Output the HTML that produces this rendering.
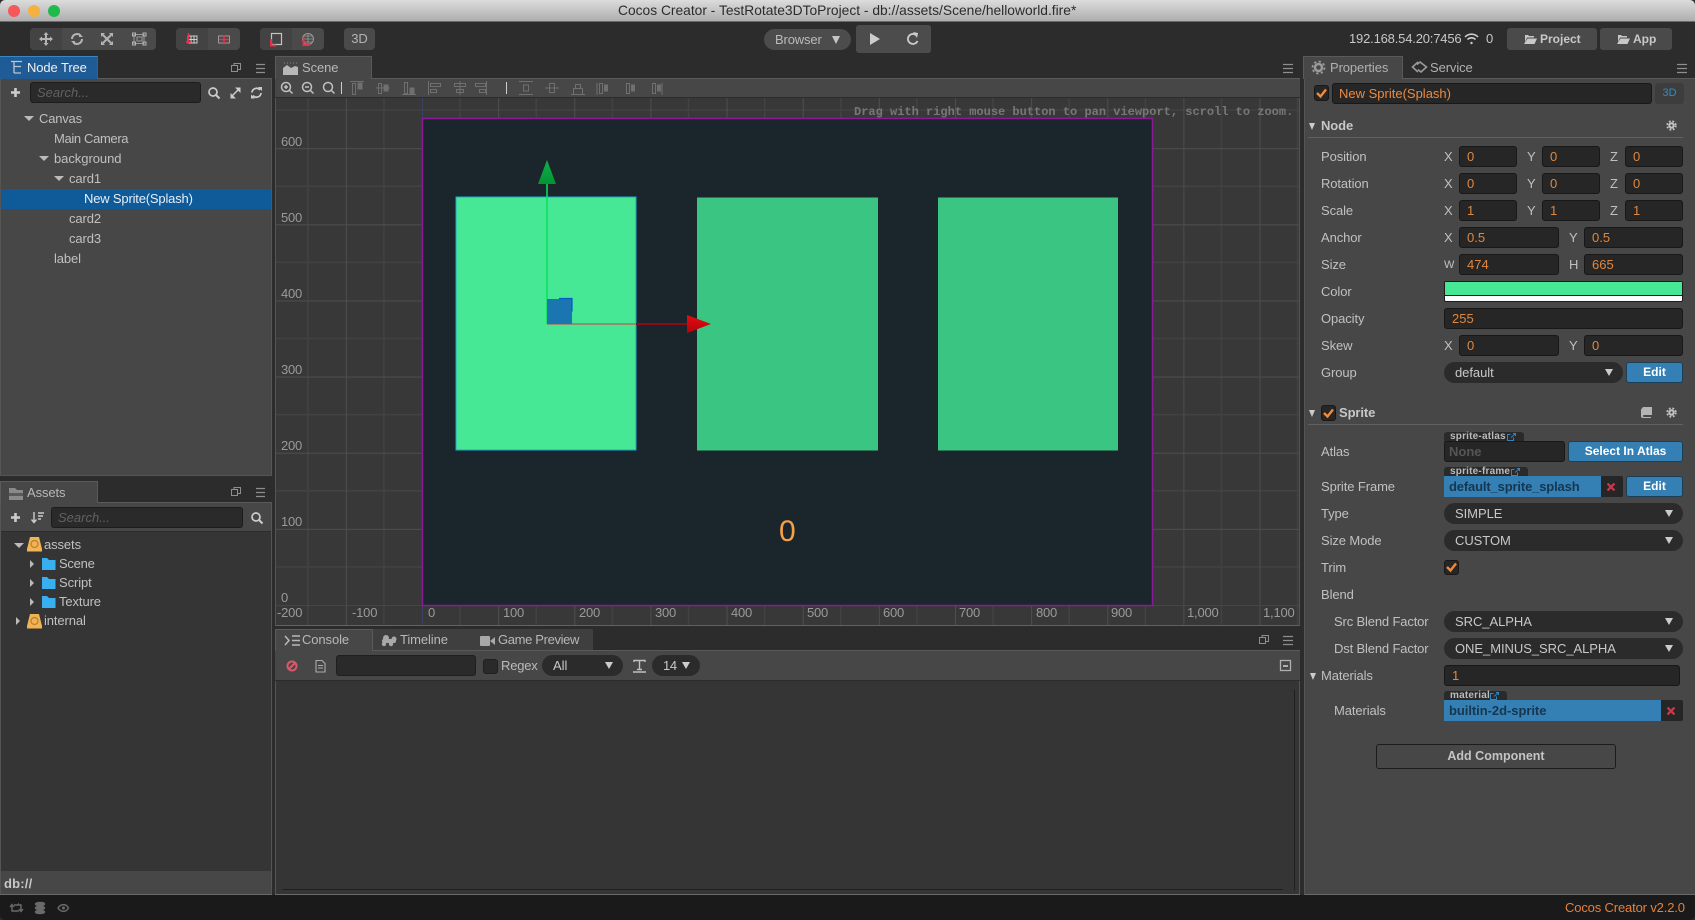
<!DOCTYPE html>
<html><head><meta charset="utf-8"><title>Cocos Creator</title>
<style>
html,body{margin:0;padding:0;background:#1a1a1a}
#w{position:relative;width:1695px;height:920px;overflow:hidden;background:#2d2c2d;font-family:"Liberation Sans",sans-serif;font-size:13px;color:#c8c8c8}
#w div,#w span,#w svg{position:absolute;box-sizing:border-box}
.t{white-space:nowrap;line-height:20px;height:20px;letter-spacing:-.1px}
.i{background:#262626;border:1px solid #181818;border-radius:3px;height:21px;color:#e0873f;line-height:19px;padding-left:7px;white-space:nowrap}
.s{background:#2b2b2b;border-radius:11px;height:21px;line-height:21px;padding-left:11px;color:#c8c8c8;white-space:nowrap;letter-spacing:-.05px}
.s:after{content:"";position:absolute;right:10px;top:7px;border-left:4px solid transparent;border-right:4px solid transparent;border-top:7px solid #ccc}
.b{background:#3480b5;border:1px solid #1c3f58;border-radius:3px;color:#fff;font-weight:bold;font-size:12px;text-align:center;height:21px;line-height:19px;white-space:nowrap}
.tag{background:#2a2a2a;border-radius:3px 3px 0 0;height:10px;font-size:10px;font-weight:bold;line-height:10px;padding-left:6px;color:#bbb;white-space:nowrap;letter-spacing:.2px}
.f{background:#3480b5;height:21px;line-height:21px;padding-left:5px;color:#16364f;font-weight:bold;white-space:nowrap;letter-spacing:-.15px}
.a{width:0;height:0;border-left:5px solid transparent;border-right:5px solid transparent;border-top:5px solid #bbb}
.ar{width:0;height:0;border-top:5px solid transparent;border-bottom:5px solid transparent;border-left:5px solid #bbb}
.l{color:#c0c0c0}
.n{color:#9a9a9a;font-size:13px;letter-spacing:-.2px}
</style></head><body>
<div id="w">
<!-- title -->
<div style="left:0;top:0;width:1695px;height:22px;background:linear-gradient(#dcdcdc,#aeaeae);border-bottom:1px solid #6a6a6a;border-radius:5px 5px 0 0"></div>
<div style="left:8px;top:5px;width:12px;height:12px;border-radius:50%;background:#f6575a"></div>
<div style="left:28px;top:5px;width:12px;height:12px;border-radius:50%;background:#f5b13f"></div>
<div style="left:48px;top:5px;width:12px;height:12px;border-radius:50%;background:#1fba4a"></div>
<span class="t" style="left:618px;top:1px;color:#2c2c2c;font-size:13.8px;letter-spacing:0">Cocos Creator - TestRotate3DToProject - db://assets/Scene/helloworld.fire*</span>

<!-- toolbar -->
<div style="left:30px;top:28px;width:126px;height:22px;border-radius:4px;background:#4a4a4a"></div>
<div style="left:30px;top:28px;width:32px;height:22px;border-radius:4px 0 0 4px;background:#434343"></div>
<div style="left:176px;top:28px;width:64px;height:22px;border-radius:4px;background:#4a4a4a"></div>
<div style="left:176px;top:28px;width:32px;height:22px;border-radius:4px 0 0 4px;background:#434343"></div>
<div style="left:260px;top:28px;width:64px;height:22px;border-radius:4px;background:#4a4a4a"></div>
<div style="left:260px;top:28px;width:32px;height:22px;border-radius:4px 0 0 4px;background:#434343"></div>
<div style="left:344px;top:28px;width:31px;height:22px;border-radius:4px;background:#4a4a4a;text-align:center;line-height:21px;font-size:13px;color:#b4b4b4">3D</div>
<svg style="left:30px;top:28px" width="300" height="22" viewBox="0 0 300 22" fill="none" stroke="#b4b4b4" stroke-width="2">
 <path d="M16 6v10M11 11h10"/><path d="M16 4l-2.500 3h5zM16 18l-2.500-3h5zM9 11l3-2.500v5zM23 11l-3-2.500v5z" fill="#b4b4b4" stroke="none"/>
 <path d="M42 11a5 5 0 0 1 8.500-3.500M52 11a5 5 0 0 1-8.500 3.500"/><path d="M49 5v4h4zM45 17v-4h-4z" fill="#b4b4b4" stroke="none"/>
 <path d="M73 7l8 8M81 7l-8 8"/><path d="M71 5h4l-4 4zM83 5h-4l4 4zM71 17h4l-4-4zM83 17h-4l4-4z" fill="#b4b4b4" stroke="none"/>
 <rect x="104" y="6.500" width="10" height="9" stroke-width="1" stroke="#999"/><rect x="107" y="9" width="5" height="4" stroke-width="1" stroke="#999"/><rect x="102.500" y="5" width="3" height="3" stroke-width="1"/><rect x="113" y="5" width="3" height="3" stroke-width="1"/><rect x="102.500" y="14" width="3" height="3" stroke-width="1"/><rect x="113" y="14" width="3" height="3" stroke-width="1"/>
 <g stroke-width="1"><path d="M158 8h9v7h-9zM161 8v7M164 8v7M158 11.500h9" stroke="#cfcfcf"/><path d="M158.500 5v11M156 14h5" stroke="#e8304a" stroke-width="1.500"/></g>
 <g stroke-width="1"><path d="M188.500 8h11v7h-11zM194 8v7" stroke="#9a9a9a"/><path d="M194 7v9M189 11.500h10" stroke="#e8304a" stroke-width="1.500"/></g>
 <rect x="241.500" y="5.500" width="10" height="11" stroke="#c4c4c4" stroke-width="1.200"/><path d="M241 11v6.500h5" stroke="#e8304a" stroke-width="2"/>
 <circle cx="278" cy="11" r="5.500" stroke="#999" stroke-width="1"/><path d="M272.500 11h11M278 5.500v11M274 8h8M274 14h8" stroke="#999" stroke-width=".8"/><path d="M273.500 9v8h6" stroke="#e8304a" stroke-width="2"/>
</svg>
<div style="left:764px;top:29px;width:87px;height:21px;border-radius:11px;background:#4c4c4c;line-height:21px;padding-left:11px;color:#bbb;letter-spacing:-.15px">Browser</div>
<div style="left:832px;top:36px;border-left:4px solid transparent;border-right:4px solid transparent;border-top:8px solid #c4c4c4;width:0;height:0"></div>
<div style="left:856px;top:25px;width:75px;height:28px;border-radius:3px;background:#4c4c4c"></div>
<svg style="left:856px;top:25px" width="75" height="28" viewBox="0 0 75 28"><path d="M14 8l10 6-10 6z" fill="#ccc"/><path d="M60 10a5 5 0 1 0 1.500 6" fill="none" stroke="#ccc" stroke-width="1.800"/><path d="M57 7l5 1-1 5z" fill="#ccc"/></svg>
<span class="t" style="left:1349px;top:29px;font-size:13px;color:#c8c8c8;letter-spacing:-.18px">192.168.54.20:7456</span>
<svg style="left:1464px;top:32px" width="15" height="14" viewBox="0 0 15 14" fill="none" stroke="#ccc" stroke-width="1.600"><path d="M1 5a9 9 0 0 1 13 0M3.500 7.500a5.500 5.500 0 0 1 8 0"/><circle cx="7.500" cy="11" r="1.200" fill="#ccc" stroke="none"/></svg>
<span class="t" style="left:1486px;top:29px;color:#c8c8c8">0</span>
<div style="left:1507px;top:28px;width:90px;height:22px;border-radius:3px;background:#4a4a4a;color:#c8c8c8;font-weight:bold;line-height:22px;padding-left:33px;font-size:12px">Project</div>
<div style="left:1600px;top:28px;width:72px;height:22px;border-radius:3px;background:#4a4a4a;color:#c8c8c8;font-weight:bold;line-height:22px;padding-left:33px;font-size:12px">App</div>
<svg style="left:1524px;top:34px" width="13" height="10" viewBox="0 0 13 10" fill="#c8c8c8"><path d="M0 1h4l1 1h5v1.500H3L1 8V1zM3.500 4.500H13L10.500 10H0z"/></svg>
<svg style="left:1617px;top:34px" width="13" height="10" viewBox="0 0 13 10" fill="#c8c8c8"><path d="M0 1h4l1 1h5v1.500H3L1 8V1zM3.500 4.500H13L10.500 10H0z"/></svg>

<!-- Node tree panel -->
<div style="left:0;top:78px;width:272px;height:398px;background:#474747;border:1px solid #555;border-top:1px solid #5a5a5a"></div>
<div style="left:0;top:56px;width:98px;height:23px;background:#1f5c96;border-top:1px solid #3b86c6;border-right:1px solid #5a5a5a"></div>
<svg style="left:10px;top:60px" width="13" height="15" viewBox="0 0 13 15" fill="none" stroke="#b9c6d2" stroke-width="1.300"><path d="M1 1.500h11M4 1.500v11.500M4 6.500h7M4 13h7"/></svg>
<span class="t" style="left:27px;top:58px;color:#f0f0f0;font-size:13px">Node Tree</span>
<svg style="left:230px;top:62px" width="42" height="14" viewBox="0 0 42 14" fill="none" stroke="#8e8e8e"><rect x="1.500" y="3.500" width="6" height="6"/><path d="M4 3.500V1.500h6.500v6H8"/><path d="M26 2.500h9M26 6.500h9M26 10.500h9" stroke-width="1.200"/></svg>
<div style="left:30px;top:82px;width:171px;height:21px;background:#2a2a2a;border:1px solid #1c1c1c;border-radius:3px;font-style:italic;color:#616161;line-height:19px;padding-left:6px">Search...</div>
<svg style="left:8px;top:84px" width="264" height="18" viewBox="0 0 264 18" fill="none" stroke="#ccc" stroke-width="2"><path d="M7.500 4v9M3 8.500h9" stroke-width="2.600"/><circle cx="205" cy="8" r="4" stroke-width="1.700"/><path d="M208 11l3.500 3.500"/><path d="M223 13l9-9" stroke-width="1.500"/><path d="M227 3.500h5.500V9zM228 14.500h-5.500V9z" fill="#ccc" stroke="none"/><path d="M244 8.500a4.500 4.500 0 0 1 8-2.500M253 9a4.500 4.500 0 0 1-8 2.500" stroke-width="1.700"/><path d="M250 3h4v4zM247 14.500h-4v-4z" fill="#ccc" stroke="none"/></svg>
<div class="a" style="left:24px;top:116px"></div>
<span class="t l" style="left:39px;top:109px;letter-spacing:-.2px">Canvas</span>
<span class="t l" style="left:54px;top:129px;letter-spacing:-.35px">Main Camera</span>
<div class="a" style="left:39px;top:156px"></div>
<span class="t l" style="left:54px;top:149px;letter-spacing:-.05px">background</span>
<div class="a" style="left:54px;top:176px"></div>
<span class="t l" style="left:69px;top:169px">card1</span>
<div style="left:1px;top:189px;width:270px;height:20px;background:#0f5b9a"></div>
<span class="t" style="left:84px;top:189px;color:#e6eef5;letter-spacing:-.18px">New Sprite(Splash)</span>
<span class="t l" style="left:69px;top:209px">card2</span>
<span class="t l" style="left:69px;top:229px">card3</span>
<span class="t l" style="left:54px;top:249px">label</span>

<!-- Assets panel -->
<div style="left:0;top:502px;width:272px;height:393px;background:#353535;border:1px solid #555;border-top:0"></div>
<div style="left:1px;top:502px;width:270px;height:30px;background:#474747;border-top:1px solid #5a5a5a;border-bottom:1px solid #2c2c2c"></div>
<div style="left:0;top:481px;width:98px;height:22px;background:#474747;border:1px solid #5a5a5a;border-bottom:0"></div>
<svg style="left:8px;top:487px" width="16" height="14" viewBox="0 0 16 14"><path d="M1 1h6l2 2h6v10H1z" fill="#8a8a8a"/><path d="M1 6h14v3H1z" fill="#5a5a5a"/></svg>
<span class="t" style="left:27px;top:483px;color:#b8b8b8">Assets</span>
<svg style="left:230px;top:486px" width="42" height="14" viewBox="0 0 42 14" fill="none" stroke="#8e8e8e"><rect x="1.500" y="3.500" width="6" height="6"/><path d="M4 3.500V1.500h6.500v6H8"/><path d="M26 2.500h9M26 6.500h9M26 10.500h9" stroke-width="1.200"/></svg>
<div style="left:51px;top:507px;width:192px;height:21px;background:#2a2a2a;border:1px solid #1c1c1c;border-radius:3px;font-style:italic;color:#616161;line-height:19px;padding-left:6px">Search...</div>
<svg style="left:8px;top:509px" width="264" height="18" viewBox="0 0 264 18" fill="none" stroke="#ccc" stroke-width="2"><path d="M7.500 4v9M3 8.500h9" stroke-width="2.600"/><path d="M26 3v10M23.500 10.500l2.500 3 2.500-3M30 4h6M30 7h5M30 10h3" stroke-width="1.400"/><circle cx="248" cy="8" r="4" stroke-width="1.700"/><path d="M251 11l3.500 3.500"/></svg>
<div class="a" style="left:14px;top:543px"></div>
<div class="ar" style="left:30px;top:559px;border-left-width:4px;border-top-width:4px;border-bottom-width:4px;margin-top:1px"></div>
<div class="ar" style="left:30px;top:578px;border-left-width:4px;border-top-width:4px;border-bottom-width:4px;margin-top:1px"></div>
<div class="ar" style="left:30px;top:597px;border-left-width:4px;border-top-width:4px;border-bottom-width:4px;margin-top:1px"></div>
<div class="ar" style="left:16px;top:616px;border-left-width:4px;border-top-width:4px;border-bottom-width:4px;margin-top:1px"></div>
<svg style="left:27px;top:536px" width="15" height="17" viewBox="0 0 15 17"><path d="M3 1h9l3 12v2.500H0V13z" fill="#f0b356"/><circle cx="7.500" cy="8" r="3.500" fill="none" stroke="#b97f2c" stroke-width="1.200"/></svg>
<svg style="left:27px;top:613px" width="15" height="17" viewBox="0 0 15 17"><path d="M3 1h9l3 12v2.500H0V13z" fill="#f0b356"/><circle cx="7.500" cy="8" r="3.500" fill="none" stroke="#b97f2c" stroke-width="1.200"/></svg>
<svg style="left:42px;top:558px" width="14" height="12" viewBox="0 0 14 12"><path d="M0 0h5l2 2h6.500v10H0z" fill="#38b0ef"/></svg>
<svg style="left:42px;top:577px" width="14" height="12" viewBox="0 0 14 12"><path d="M0 0h5l2 2h6.500v10H0z" fill="#38b0ef"/></svg>
<svg style="left:42px;top:596px" width="14" height="12" viewBox="0 0 14 12"><path d="M0 0h5l2 2h6.500v10H0z" fill="#38b0ef"/></svg>
<span class="t l" style="left:44px;top:535px">assets</span>
<span class="t l" style="left:59px;top:554px;letter-spacing:-.25px">Scene</span>
<span class="t l" style="left:59px;top:573px">Script</span>
<span class="t l" style="left:59px;top:592px">Texture</span>
<span class="t l" style="left:44px;top:611px">internal</span>
<div style="left:1px;top:871px;width:270px;height:23px;background:#474747"></div>
<span class="t" style="left:4px;top:874px;font-weight:bold;color:#c8c8c8;font-size:13px;letter-spacing:.2px">db://</span>
<div style="left:0;top:894px;width:272px;height:1px;background:#6a6a6a"></div>

<!-- Scene panel -->
<div style="left:275px;top:78px;width:1025px;height:20px;background:#474747;border-top:1px solid #5a5a5a;border-bottom:1px solid #2c2c2c"></div>
<div style="left:275px;top:56px;width:97px;height:23px;background:#474747;border:1px solid #5a5a5a;border-bottom:0"></div>
<svg style="left:283px;top:61px" width="16" height="15" viewBox="0 0 16 15"><path d="M0 14V7l4-3 4 3 4-2 3 1v8z" fill="#b8b8b8"/><path d="M1 2h14" stroke="#888" stroke-dasharray="1 2"/></svg>
<span class="t" style="left:302px;top:58px;color:#b8b8b8">Scene</span>
<svg style="left:1282px;top:62px" width="14" height="14" viewBox="0 0 14 14" stroke="#8e8e8e" stroke-width="1.200"><path d="M1 2.500h10M1 6.500h10M1 10.500h10"/></svg>
<svg style="left:275px;top:78px" width="400" height="20" viewBox="0 0 400 20" fill="none" stroke="#aaa">
 <g stroke="#c0c0c0" stroke-width="1.500"><circle cx="11" cy="9" r="4.500"/><path d="M14.500 12.500l3 3M9 9h4M11 7v4"/><circle cx="32" cy="9" r="4.500"/><path d="M35.500 12.500l3 3M30 9h4"/><circle cx="53" cy="9" r="4.500"/><path d="M56.500 12.500l3 3"/></g>
 <path d="M66.500 4v12" stroke="#ccc"/><path d="M231.500 4v12" stroke="#ccc"/>
 <g stroke="#6f6f6f">
  <path d="M75 3.500h14M77.500 5.500h3v11h-3z"/><path d="M83 5h4v6h-4z" fill="#6f6f6f"/>
  <path d="M101 10h14M103.500 5.500h3v10h-3z"/><path d="M109 7h4v6h-4z" fill="#6f6f6f"/>
  <path d="M127 16.500h14M129.500 4.500h3v11h-3z"/><path d="M135 10h4v6h-4z" fill="#6f6f6f"/>
  <path d="M153.500 3v14M155.500 5.500h10v3h-10zM155.500 11.500h6v3h-6z"/>
  <path d="M185 3v14M179.500 5.500h11v3h-11zM181.500 11.500h7v3h-7z"/>
  <path d="M211.500 3v14M200.500 5.500h10v3h-10zM204.500 11.500h6v3h-6z"/>
  <path d="M244 3.500h14M244 16.500h14M248.500 7h5v6h-5z"/>
  <path d="M270 10h14M274.500 5.500h5v9h-5z"/>
  <path d="M296 16.500h14M300.500 6.500h5v4h-5zM298.500 10.500h9v6h-9z"/>
  <path d="M322 5v12"/><path d="M324.500 5.500h3v10h-3z"/><path d="M329.500 7h3v6h-3z" fill="#6f6f6f"/>
  <path d="M351.500 5.500h3v10h-3z"/><path d="M356.500 7h3v6h-3z" fill="#6f6f6f"/>
  <path d="M377.500 5.500h3v10h-3z"/><path d="M382.500 7h3v6h-3z" fill="#6f6f6f"/><path d="M387 5v12"/>
 </g>
</svg>
<!-- grid -->
<svg style="left:275px;top:98px" width="1025" height="528" viewBox="275 98 1025 528" shape-rendering="crispEdges">
 <defs>
  <pattern id="g" patternUnits="userSpaceOnUse" x="422" y="605" width="76.14" height="76.14">
   <path d="M38.070 0V76.140M0 38.070H76.140" stroke="#424242" stroke-width="1"/>
   <path d="M.5 0V76.140M0 .5H76.140" stroke="#4e4e4e" stroke-width="1"/>
  </pattern>
 </defs>
 <rect x="275" y="98" width="1025" height="528" fill="#383838"/>
 <rect x="275" y="98" width="1025" height="528" fill="url(#g)"/>
 <path d="M275 605.500H422M1153 605.500H1300" stroke="#6b3636"/>
 <path d="M422.500 98V118M422.500 606V625" stroke="#3c4163"/>
 <rect x="422.500" y="118.500" width="730" height="487" fill="#1b262c" stroke="#8a1a96" stroke-width="1.500" shape-rendering="auto"/>
 <rect x="456" y="197" width="180" height="253" fill="#46e896" stroke="#1fa6cf"/>
 <rect x="697" y="197.500" width="181" height="253" fill="#3bc582"/>
 <rect x="938" y="197.500" width="180" height="253" fill="#3bc582"/>
 <rect x="275" y="625" width="1025" height="1" fill="#626262"/>
 <rect x="275" y="98" width="1" height="528" fill="#555"/>
 <rect x="1299" y="98" width="1" height="528" fill="#555"/>
</svg>
<span class="t n" style="left:281px;top:132px">600</span>
<span class="t n" style="left:281px;top:208px">500</span>
<span class="t n" style="left:281px;top:284px">400</span>
<span class="t n" style="left:281px;top:360px">300</span>
<span class="t n" style="left:281px;top:436px">200</span>
<span class="t n" style="left:281px;top:512px">100</span>
<span class="t n" style="left:281px;top:588px">0</span>
<span class="t n" style="left:277px;top:603px">-200</span>
<span class="t n" style="left:352px;top:603px">-100</span>
<span class="t n" style="left:428px;top:603px">0</span>
<span class="t n" style="left:503px;top:603px">100</span>
<span class="t n" style="left:579px;top:603px">200</span>
<span class="t n" style="left:655px;top:603px">300</span>
<span class="t n" style="left:731px;top:603px">400</span>
<span class="t n" style="left:807px;top:603px">500</span>
<span class="t n" style="left:883px;top:603px">600</span>
<span class="t n" style="left:959px;top:603px">700</span>
<span class="t n" style="left:1036px;top:603px">800</span>
<span class="t n" style="left:1111px;top:603px">900</span>
<span class="t n" style="left:1187px;top:603px">1,000</span>
<span class="t n" style="left:1263px;top:603px">1,100</span>
<span class="t" style="left:854px;top:102px;font-family:'Liberation Mono',monospace;font-size:12px;font-weight:bold;color:#777;letter-spacing:0">Drag with right mouse button to pan viewport, scroll to zoom.</span>
<span class="t" style="left:779px;top:516px;font-size:30px;line-height:32px;height:32px;color:#f7a145;letter-spacing:0">0</span>
<svg style="left:530px;top:155px" width="190" height="180" viewBox="530 155 190 180">
 <defs><linearGradient id="gg" x1="0" y1="0" x2="0" y2="1"><stop offset="0" stop-color="#0fb148"/><stop offset="1" stop-color="#029333"/></linearGradient><linearGradient id="rg" x1="0" y1="0" x2="0" y2="1"><stop offset="0" stop-color="#e40d12"/><stop offset="1" stop-color="#b5030a"/></linearGradient></defs>
 <path d="M547 184V324" stroke="#08e35f" stroke-width="1.500"/>
 <path d="M547 160l9 24h-18z" fill="url(#gg)"/>
 <path d="M547 324H636" stroke="#8c906c" stroke-width="2"/>
 <path d="M636 324H688" stroke="#8f0a17" stroke-width="2"/>
 <path d="M687 315l24 9-24 9z" fill="url(#rg)"/>
 <rect x="547" y="299" width="25" height="25" fill="#1a75b0"/>
 <path d="M559 298.500h13v13" fill="none" stroke="#0459c9" stroke-width="1.200"/>
</svg>

<!-- Console -->
<div style="left:275px;top:629px;width:318px;height:21px;background:#3f3f3f"></div>
<div style="left:275px;top:650px;width:1025px;height:31px;background:#474747;border-top:1px solid #5a5a5a;border-bottom:1px solid #2c2c2c"></div>
<div style="left:275px;top:681px;width:1025px;height:214px;background:#353535;border-left:1px solid #555;border-right:1px solid #555"></div>
<div style="left:275px;top:629px;width:98px;height:22px;background:#474747;border:1px solid #5a5a5a;border-bottom:0"></div>
<svg style="left:284px;top:634px" width="17" height="13" viewBox="0 0 17 13" fill="none" stroke="#b8b8b8" stroke-width="1.500"><path d="M1 2l4 4.500-4 4.500M8 2h8M8 6.500h8M8 11h8"/></svg>
<span class="t" style="left:302px;top:630px;color:#b8b8b8">Console</span>
<svg style="left:381px;top:634px" width="17" height="13" viewBox="0 0 17 13" fill="#a8a8a8"><rect x="1" y="5" width="14" height="4" rx="2"/><circle cx="5" cy="4" r="3"/><circle cx="13" cy="5" r="2.500"/><circle cx="3" cy="10" r="2.200"/><circle cx="10" cy="10" r="2.200"/></svg>
<span class="t" style="left:400px;top:630px;color:#b8b8b8">Timeline</span>
<svg style="left:480px;top:636px" width="15" height="10" viewBox="0 0 15 10" fill="#a8a8a8"><rect width="10" height="10" rx="1"/><path d="M10 5l5-4v8z"/></svg>
<span class="t" style="left:498px;top:630px;color:#b8b8b8;letter-spacing:-.35px">Game Preview</span>
<svg style="left:1258px;top:634px" width="40" height="14" viewBox="0 0 40 14" fill="none" stroke="#8e8e8e"><rect x="1.500" y="3.500" width="6" height="6"/><path d="M4 3.500V1.500h6.500v6H8"/><path d="M25 2.500h10M25 6.500h10M25 10.500h10" stroke-width="1.200"/></svg>
<svg style="left:284px;top:658px" width="46" height="16" viewBox="0 0 46 16" fill="none"><circle cx="8" cy="8" r="4.500" stroke="#d9596a" stroke-width="2"/><path d="M5 11l6-6" stroke="#d9596a" stroke-width="2"/><path d="M32 2.500h6l3 3v8.500h-9zM34 7.500h5M34 10h5" stroke="#aaa" stroke-width="1.100"/></svg>
<div style="left:336px;top:655px;width:140px;height:21px;background:#2a2a2a;border:1px solid #1f1f1f;border-radius:3px"></div>
<div style="left:483px;top:659px;width:15px;height:15px;background:#2a2a2a;border:1px solid #1f1f1f;border-radius:3px"></div>
<span class="t" style="left:501px;top:656px;color:#bbb;letter-spacing:-.2px">Regex</span>
<div class="s" style="left:542px;top:655px;width:81px">All</div>
<svg style="left:632px;top:659px" width="15" height="14" viewBox="0 0 15 14" fill="none" stroke="#c0c0c0" stroke-width="1.400"><path d="M2 3V1.500h11V3M7.500 1.500v9M5 10.500h5M1 13h13"/></svg>
<div class="s" style="left:652px;top:655px;width:48px;letter-spacing:-.3px">14</div>
<svg style="left:1279px;top:659px" width="13" height="13" viewBox="0 0 13 13" fill="none" stroke="#b0b0b0" stroke-width="1.300"><rect x="1.500" y="1.500" width="10" height="10"/><path d="M4 6h5v2H4z" fill="#b0b0b0" stroke="none"/></svg>
<div style="left:1294px;top:690px;width:1px;height:200px;background:#1f1f1f"></div>
<div style="left:282px;top:889px;width:1001px;height:1px;background:#1f1f1f"></div>
<div style="left:275px;top:894px;width:1025px;height:1px;background:#6a6a6a"></div>

<!-- Properties -->
<div style="left:1304px;top:78px;width:391px;height:817px;background:#474747;border-top:1px solid #5a5a5a;border-left:1px solid #555;border-bottom:1px solid #6a6a6a"></div>
<div style="left:1303px;top:56px;width:100px;height:23px;background:#474747;border:1px solid #5a5a5a;border-bottom:0"></div>
<svg style="left:1311px;top:60px" width="15" height="15" viewBox="0 0 15 15" fill="none" stroke="#9a9a9a"><circle cx="7.500" cy="7.500" r="3.500" stroke-width="2.500"/><circle cx="7.500" cy="7.500" r="6" stroke-width="1.800" stroke-dasharray="2.300 2.400"/></svg>
<span class="t" style="left:1330px;top:58px;color:#b0b0b0">Properties</span>
<svg style="left:1411px;top:61px" width="17" height="12" viewBox="0 0 17 12" fill="none" stroke="#9a9a9a" stroke-width="1.600"><path d="M7 1L1.500 6 7 11M6 3.500l3-2.500 6.500 5L10 11 7 8.500"/></svg>
<span class="t" style="left:1430px;top:58px;color:#b0b0b0">Service</span>
<svg style="left:1676px;top:62px" width="14" height="14" viewBox="0 0 14 14" stroke="#8e8e8e" stroke-width="1.200"><path d="M1 2.500h10M1 6.500h10M1 10.500h10"/></svg>

<div style="left:1314px;top:85px;width:15px;height:16px;background:#262626;border:1px solid #181818;border-radius:3px"></div>
<svg style="left:1315px;top:87px" width="13" height="12" viewBox="0 0 13 12" fill="none" stroke="#f3893a" stroke-width="2.400"><path d="M2 6l3.500 3.500L11 2.500"/></svg>
<div class="i" style="left:1332px;top:83px;width:320px;color:#ee8a3f;padding-left:6px">New Sprite(Splash)</div>
<div style="left:1655px;top:83px;width:29px;height:21px;border-radius:3px;background:#3d3d3d;color:#2a8fd0;font-size:11px;line-height:21px;text-align:center">3D</div>

<div style="left:1309px;top:123px;width:0;height:0;border-left:3.500px solid transparent;border-right:3.500px solid transparent;border-top:7px solid #ccc"></div>
<span class="t" style="left:1321px;top:116px;font-weight:bold;color:#c8c8c8">Node</span>
<svg style="left:1666px;top:120px" width="11" height="11" viewBox="0 0 11 11" fill="none" stroke="#c4c4c4"><circle cx="5.500" cy="5.500" r="2.200" stroke-width="2"/><circle cx="5.500" cy="5.500" r="4.300" stroke-width="1.800" stroke-dasharray="1.800 1.700"/></svg>
<div style="left:1308px;top:137px;width:375px;height:1px;background:#616161"></div>

<span class="t l" style="left:1321px;top:147px">Position</span>
<span class="t l" style="left:1444px;top:147px">X</span><div class="i" style="left:1459px;top:146px;width:58px">0</div>
<span class="t l" style="left:1527px;top:147px">Y</span><div class="i" style="left:1542px;top:146px;width:58px">0</div>
<span class="t l" style="left:1610px;top:147px">Z</span><div class="i" style="left:1625px;top:146px;width:58px">0</div>

<span class="t l" style="left:1321px;top:174px">Rotation</span>
<span class="t l" style="left:1444px;top:174px">X</span><div class="i" style="left:1459px;top:173px;width:58px">0</div>
<span class="t l" style="left:1527px;top:174px">Y</span><div class="i" style="left:1542px;top:173px;width:58px">0</div>
<span class="t l" style="left:1610px;top:174px">Z</span><div class="i" style="left:1625px;top:173px;width:58px">0</div>

<span class="t l" style="left:1321px;top:201px">Scale</span>
<span class="t l" style="left:1444px;top:201px">X</span><div class="i" style="left:1459px;top:200px;width:58px">1</div>
<span class="t l" style="left:1527px;top:201px">Y</span><div class="i" style="left:1542px;top:200px;width:58px">1</div>
<span class="t l" style="left:1610px;top:201px">Z</span><div class="i" style="left:1625px;top:200px;width:58px">1</div>

<span class="t l" style="left:1321px;top:228px">Anchor</span>
<span class="t l" style="left:1444px;top:228px">X</span><div class="i" style="left:1459px;top:227px;width:100px">0.5</div>
<span class="t l" style="left:1569px;top:228px">Y</span><div class="i" style="left:1584px;top:227px;width:99px">0.5</div>

<span class="t l" style="left:1321px;top:255px">Size</span>
<span class="t l" style="left:1444px;top:255px;font-size:11px">W</span><div class="i" style="left:1459px;top:254px;width:100px">474</div>
<span class="t l" style="left:1569px;top:255px">H</span><div class="i" style="left:1584px;top:254px;width:99px">665</div>

<span class="t l" style="left:1321px;top:282px">Color</span>
<div style="left:1444px;top:281px;width:239px;height:21px;background:#fff;border:1px solid #1c1c1c;border-radius:2px"></div>
<div style="left:1445px;top:282px;width:237px;height:14px;background:#46e896;border-bottom:1px solid #1c1c1c"></div>

<span class="t l" style="left:1321px;top:309px">Opacity</span>
<div class="i" style="left:1444px;top:308px;width:239px">255</div>

<span class="t l" style="left:1321px;top:336px">Skew</span>
<span class="t l" style="left:1444px;top:336px">X</span><div class="i" style="left:1459px;top:335px;width:100px">0</div>
<span class="t l" style="left:1569px;top:336px">Y</span><div class="i" style="left:1584px;top:335px;width:99px">0</div>

<span class="t l" style="left:1321px;top:363px">Group</span>
<div class="s" style="left:1444px;top:362px;width:179px">default</div>
<div class="b" style="left:1626px;top:362px;width:57px">Edit</div>

<div style="left:1309px;top:410px;width:0;height:0;border-left:3.500px solid transparent;border-right:3.500px solid transparent;border-top:7px solid #ccc"></div>
<div style="left:1321px;top:405px;width:15px;height:16px;background:#262626;border:1px solid #181818;border-radius:3px"></div>
<svg style="left:1322px;top:407px" width="13" height="12" viewBox="0 0 13 12" fill="none" stroke="#f3893a" stroke-width="2.400"><path d="M2 6l3.500 3.500L11 2.500"/></svg>
<span class="t" style="left:1339px;top:403px;font-weight:bold;color:#c8c8c8">Sprite</span>
<svg style="left:1640px;top:406px" width="13" height="12" viewBox="0 0 13 12"><path d="M3 1h9v8H3.500a1.500 1.500 0 0 0 0 2H11v1H3a2 2 0 0 1-2-2V3.500z" fill="#b4b4b4"/></svg>
<svg style="left:1666px;top:407px" width="11" height="11" viewBox="0 0 11 11" fill="none" stroke="#c4c4c4"><circle cx="5.500" cy="5.500" r="2.200" stroke-width="2"/><circle cx="5.500" cy="5.500" r="4.300" stroke-width="1.800" stroke-dasharray="1.800 1.700"/></svg>
<div style="left:1308px;top:424px;width:375px;height:1px;background:#616161"></div>

<span class="t l" style="left:1321px;top:442px">Atlas</span>
<div class="tag" style="left:1444px;top:432px;width:80px">sprite-atlas</div>
<svg style="left:1507px;top:433px" width="9" height="8" viewBox="0 0 9 8" fill="none" stroke="#2f86c2"><path d="M6.500 4.500v3h-6v-6h3M4 4.500L8.500.5M6 .5h2.500v2.500"/></svg>
<div class="i" style="left:1444px;top:441px;width:121px;color:#555;font-weight:bold;padding-left:4px">None</div>
<div class="b" style="left:1568px;top:441px;width:115px">Select In Atlas</div>

<span class="t l" style="left:1321px;top:477px">Sprite Frame</span>
<div class="tag" style="left:1444px;top:467px;width:84px">sprite-frame</div>
<svg style="left:1511px;top:468px" width="9" height="8" viewBox="0 0 9 8" fill="none" stroke="#2f86c2"><path d="M6.500 4.500v3h-6v-6h3M4 4.500L8.500.5M6 .5h2.500v2.500"/></svg>
<div style="left:1444px;top:476px;width:179px;height:21px;background:#262626;border-radius:2px"></div>
<div class="f" style="left:1444px;top:476px;width:157px">default_sprite_splash</div>
<svg style="left:1607px;top:483px" width="8" height="8" viewBox="0 0 8 8" stroke="#c43a4c" stroke-width="2.300"><path d="M.5.500l7 7M7.500.500l-7 7"/></svg>
<div class="b" style="left:1626px;top:476px;width:57px">Edit</div>

<span class="t l" style="left:1321px;top:504px">Type</span>
<div class="s" style="left:1444px;top:503px;width:239px">SIMPLE</div>
<span class="t l" style="left:1321px;top:531px">Size Mode</span>
<div class="s" style="left:1444px;top:530px;width:239px">CUSTOM</div>
<span class="t l" style="left:1321px;top:558px">Trim</span>
<div style="left:1444px;top:560px;width:15px;height:15px;background:#262626;border:1px solid #181818;border-radius:3px"></div>
<svg style="left:1445px;top:561px" width="13" height="12" viewBox="0 0 13 12" fill="none" stroke="#f3893a" stroke-width="2.400"><path d="M2 6l3.500 3.500L11 2.500"/></svg>
<span class="t l" style="left:1321px;top:585px">Blend</span>
<span class="t l" style="left:1334px;top:612px;letter-spacing:-.15px">Src Blend Factor</span>
<div class="s" style="left:1444px;top:611px;width:239px">SRC_ALPHA</div>
<span class="t l" style="left:1334px;top:639px;letter-spacing:-.15px">Dst Blend Factor</span>
<div class="s" style="left:1444px;top:638px;width:239px">ONE_MINUS_SRC_ALPHA</div>
<div style="left:1310px;top:673px;width:0;height:0;border-left:3.500px solid transparent;border-right:3.500px solid transparent;border-top:7px solid #ccc"></div>
<span class="t l" style="left:1321px;top:666px">Materials</span>
<div class="i" style="left:1444px;top:665px;width:236px">1</div>
<span class="t l" style="left:1334px;top:701px">Materials</span>
<div class="tag" style="left:1444px;top:691px;width:63px">material</div>
<svg style="left:1490px;top:692px" width="9" height="8" viewBox="0 0 9 8" fill="none" stroke="#2f86c2"><path d="M6.500 4.500v3h-6v-6h3M4 4.500L8.500.5M6 .5h2.500v2.500"/></svg>
<div style="left:1444px;top:700px;width:239px;height:21px;background:#262626;border-radius:2px"></div>
<div class="f" style="left:1444px;top:700px;width:217px;letter-spacing:-.05px">builtin-2d-sprite</div>
<svg style="left:1667px;top:707px" width="8" height="8" viewBox="0 0 8 8" stroke="#c43a4c" stroke-width="2.300"><path d="M.5.500l7 7M7.500.500l-7 7"/></svg>
<div style="left:1376px;top:744px;width:240px;height:25px;background:#474747;border:1px solid #1c1c1c;border-radius:3px;text-align:center;font-weight:bold;color:#c4c4c4;line-height:23px;font-size:12.5px">Add Component</div>

<!-- status -->
<div style="left:0;top:895px;width:1695px;height:25px;background:#1a1a1a;border-radius:0 0 5px 5px"></div>
<svg style="left:9px;top:901px" width="62" height="14" viewBox="0 0 62 14" fill="none" stroke="#6a6a6a" stroke-width="1.400"><path d="M3 4v6h7M10 3h-1M12 10V4H5"/><path d="M1 6l2-2.500L5 6M10 8l2 2.500L14 8"/><ellipse cx="31" cy="3" rx="4.500" ry="1.500" fill="#6a6a6a"/><ellipse cx="31" cy="7" rx="4.500" ry="1.500" fill="#6a6a6a"/><ellipse cx="31" cy="11" rx="4.500" ry="1.500" fill="#6a6a6a"/><path d="M49 7c3-4.500 8-4.500 10.500 0-2.500 4.500-7.500 4.500-10.500 0z"/><circle cx="54.500" cy="7" r="1.500" fill="#6a6a6a" stroke="none"/></svg>
<span class="t" style="left:1565px;top:898px;color:#e7813a;letter-spacing:-.15px">Cocos Creator v2.2.0</span>
</div>
</body></html>
